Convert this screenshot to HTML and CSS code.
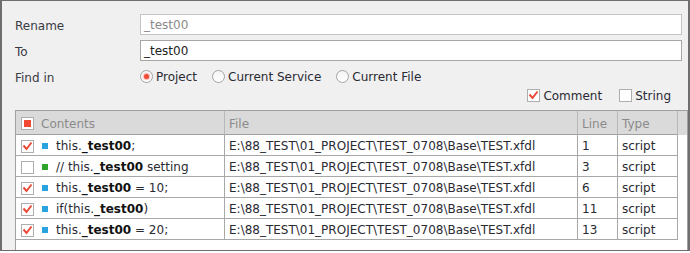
FILE: index.html
```html
<!DOCTYPE html>
<html lang="en">
<head>
  <meta charset="UTF-8">
  <title>Rename</title>
  <link rel="stylesheet" href="styles.css">
</head>
<body>
  <div class="dialog">

    <!-- Rename / To / Find in -->
    <div class="form">
      <label class="lbl">Rename</label>
      <div class="field disabled">_test00</div>

      <label class="lbl">To</label>
      <div class="field">_test00</div>

      <label class="lbl">Find in</label>
      <div class="radios">
        <span class="opt"><span class="radio on"></span>Project</span>
        <span class="opt"><span class="radio"></span>Current Service</span>
        <span class="opt"><span class="radio"></span>Current File</span>
      </div>
    </div>

    <!-- Comment / String filters -->
    <div class="filters">
      <span class="opt">
        <span class="check">
          <svg viewBox="0 0 13 13"><path d="M2.5 5.5 L5.5 9 L10.5 2.5"/></svg>
        </span>Comment
      </span>
      <span class="opt"><span class="check"></span>String</span>
    </div>

    <!-- Result list -->
    <div class="grid">
      <div class="row head">
        <div class="cell contents"><span class="check partial"></span>Contents</div>
        <div class="cell">File</div>
        <div class="cell">Line</div>
        <div class="cell">Type</div>
        <div class="cell filler"></div>
      </div>

      <div class="row">
        <div class="cell contents">
          <span class="check"><svg viewBox="0 0 13 13"><path d="M2.5 5.5 L5.5 9 L10.5 2.5"/></svg></span>
          <span class="mark code"></span>
          <span>this.<b>_test00</b>;</span>
        </div>
        <div class="cell">E:\88_TEST\01_PROJECT\TEST_0708\Base\TEST.xfdl</div>
        <div class="cell">1</div>
        <div class="cell">script</div>
        <div class="cell filler"></div>
      </div>

      <div class="row">
        <div class="cell contents">
          <span class="check"></span>
          <span class="mark comment"></span>
          <span>// this.<b>_test00</b> setting</span>
        </div>
        <div class="cell">E:\88_TEST\01_PROJECT\TEST_0708\Base\TEST.xfdl</div>
        <div class="cell">3</div>
        <div class="cell">script</div>
        <div class="cell filler"></div>
      </div>

      <div class="row">
        <div class="cell contents">
          <span class="check"><svg viewBox="0 0 13 13"><path d="M2.5 5.5 L5.5 9 L10.5 2.5"/></svg></span>
          <span class="mark code"></span>
          <span>this.<b>_test00</b> = 10;</span>
        </div>
        <div class="cell">E:\88_TEST\01_PROJECT\TEST_0708\Base\TEST.xfdl</div>
        <div class="cell">6</div>
        <div class="cell">script</div>
        <div class="cell filler"></div>
      </div>

      <div class="row">
        <div class="cell contents">
          <span class="check"><svg viewBox="0 0 13 13"><path d="M2.5 5.5 L5.5 9 L10.5 2.5"/></svg></span>
          <span class="mark code"></span>
          <span>if(this.<b>_test00</b>)</span>
        </div>
        <div class="cell">E:\88_TEST\01_PROJECT\TEST_0708\Base\TEST.xfdl</div>
        <div class="cell">11</div>
        <div class="cell">script</div>
        <div class="cell filler"></div>
      </div>

      <div class="row">
        <div class="cell contents">
          <span class="check"><svg viewBox="0 0 13 13"><path d="M2.5 5.5 L5.5 9 L10.5 2.5"/></svg></span>
          <span class="mark code"></span>
          <span>this.<b>_test00</b> = 20;</span>
        </div>
        <div class="cell">E:\88_TEST\01_PROJECT\TEST_0708\Base\TEST.xfdl</div>
        <div class="cell">13</div>
        <div class="cell">script</div>
        <div class="cell filler"></div>
      </div>
    </div>

  </div>
</body>
</html>
```

FILE: styles.css
```css
* {
  box-sizing: border-box;
}

body {
  margin: 0;
  font-family: "DejaVu Sans", Verdana, sans-serif;
  font-size: 12px;
  color: #2a2a33;
}

/* Outer dialog frame */
.dialog {
  width: 690px;
  height: 251px;
  border: 1px solid #6e6e6e;
  border-left-width: 2px;
  border-right-width: 2px;
  background: #f0f0f0;
  padding: 13px 0 0 13px;
  display: flex;
  flex-direction: column;
  overflow: hidden;
}

/* Label + control rows */
.form {
  display: grid;
  grid-template-columns: 125px 542px;
  grid-auto-rows: 21px;
  row-gap: 5px;
  align-items: center;
}

.lbl {
  color: #3a3a44;
  padding-top: 2px;
}

.field {
  height: 21px;
  border: 1px solid #a6a6a6;
  background: #fff;
  padding: 1px 3px 0;
  line-height: 19px;
  color: #222;
}
.field.disabled {
  border-color: #c4c4c4;
  color: #8a8a8a;
}

.radios {
  display: flex;
  align-items: center;
  gap: 15px;
}

.opt {
  display: flex;
  align-items: center;
  gap: 3px;
}

/* Radio button */
.radio {
  width: 13px;
  height: 13px;
  border-radius: 50%;
  border: 1px solid #a4a4a4;
  background: linear-gradient(#f4f4f4, #ffffff);
  display: flex;
  align-items: center;
  justify-content: center;
}
.radio.on::after {
  content: "";
  width: 5px;
  height: 5px;
  border-radius: 50%;
  background: #ee4b38;
  box-shadow: 0 0 1px 1px #f8b8ae;
}

/* Checkbox */
.check {
  width: 13px;
  height: 13px;
  flex: none;
  border: 1px solid #aeaeae;
  background: #fff;
  display: flex;
  align-items: center;
  justify-content: center;
}
.check svg {
  width: 13px;
  height: 13px;
  margin: -1px;
}
.check svg path {
  fill: none;
  stroke: #ea4a37;
  stroke-width: 2;
}
.check.partial::after {
  content: "";
  width: 7px;
  height: 7px;
  background: #f04a35;
}

.filters {
  margin-top: 2px;
  height: 13px;
  display: flex;
  justify-content: flex-end;
  gap: 17px;
  padding-right: 17px;
}

/* Result grid */
.grid {
  flex: 1;
  margin-top: 8px;
  border: 1px solid #a0a0a0;
  border-bottom: none;
  background: #fff;
}

.row {
  display: grid;
  grid-template-columns: 209px 353px 40px 60px 1fr;
  height: 21px;
}

.cell {
  display: flex;
  align-items: center;
  padding: 2px 4px 0;
  border-right: 1px solid #a8a8a8;
  border-bottom: 1px solid #a8a8a8;
  white-space: nowrap;
  overflow: hidden;
}
.cell.filler {
  border: none;
}

.row.head {
  height: 24px;
  background: #dadada;
  color: #8b8b8b;
}
.row.head .cell {
  border-color: #b8b8b8;
}
.row.head .cell:not(.filler) {
  border-bottom-color: #a0a0a0;
}

.contents {
  padding-left: 5px;
  gap: 8px;
}
.row.head .contents {
  gap: 7px;
}

.mark {
  width: 6px;
  height: 6px;
  flex: none;
}
.mark.code {
  background: #2aa4e0;
}
.mark.comment {
  background: #2ea52a;
}

b {
  color: #111;
}
```
